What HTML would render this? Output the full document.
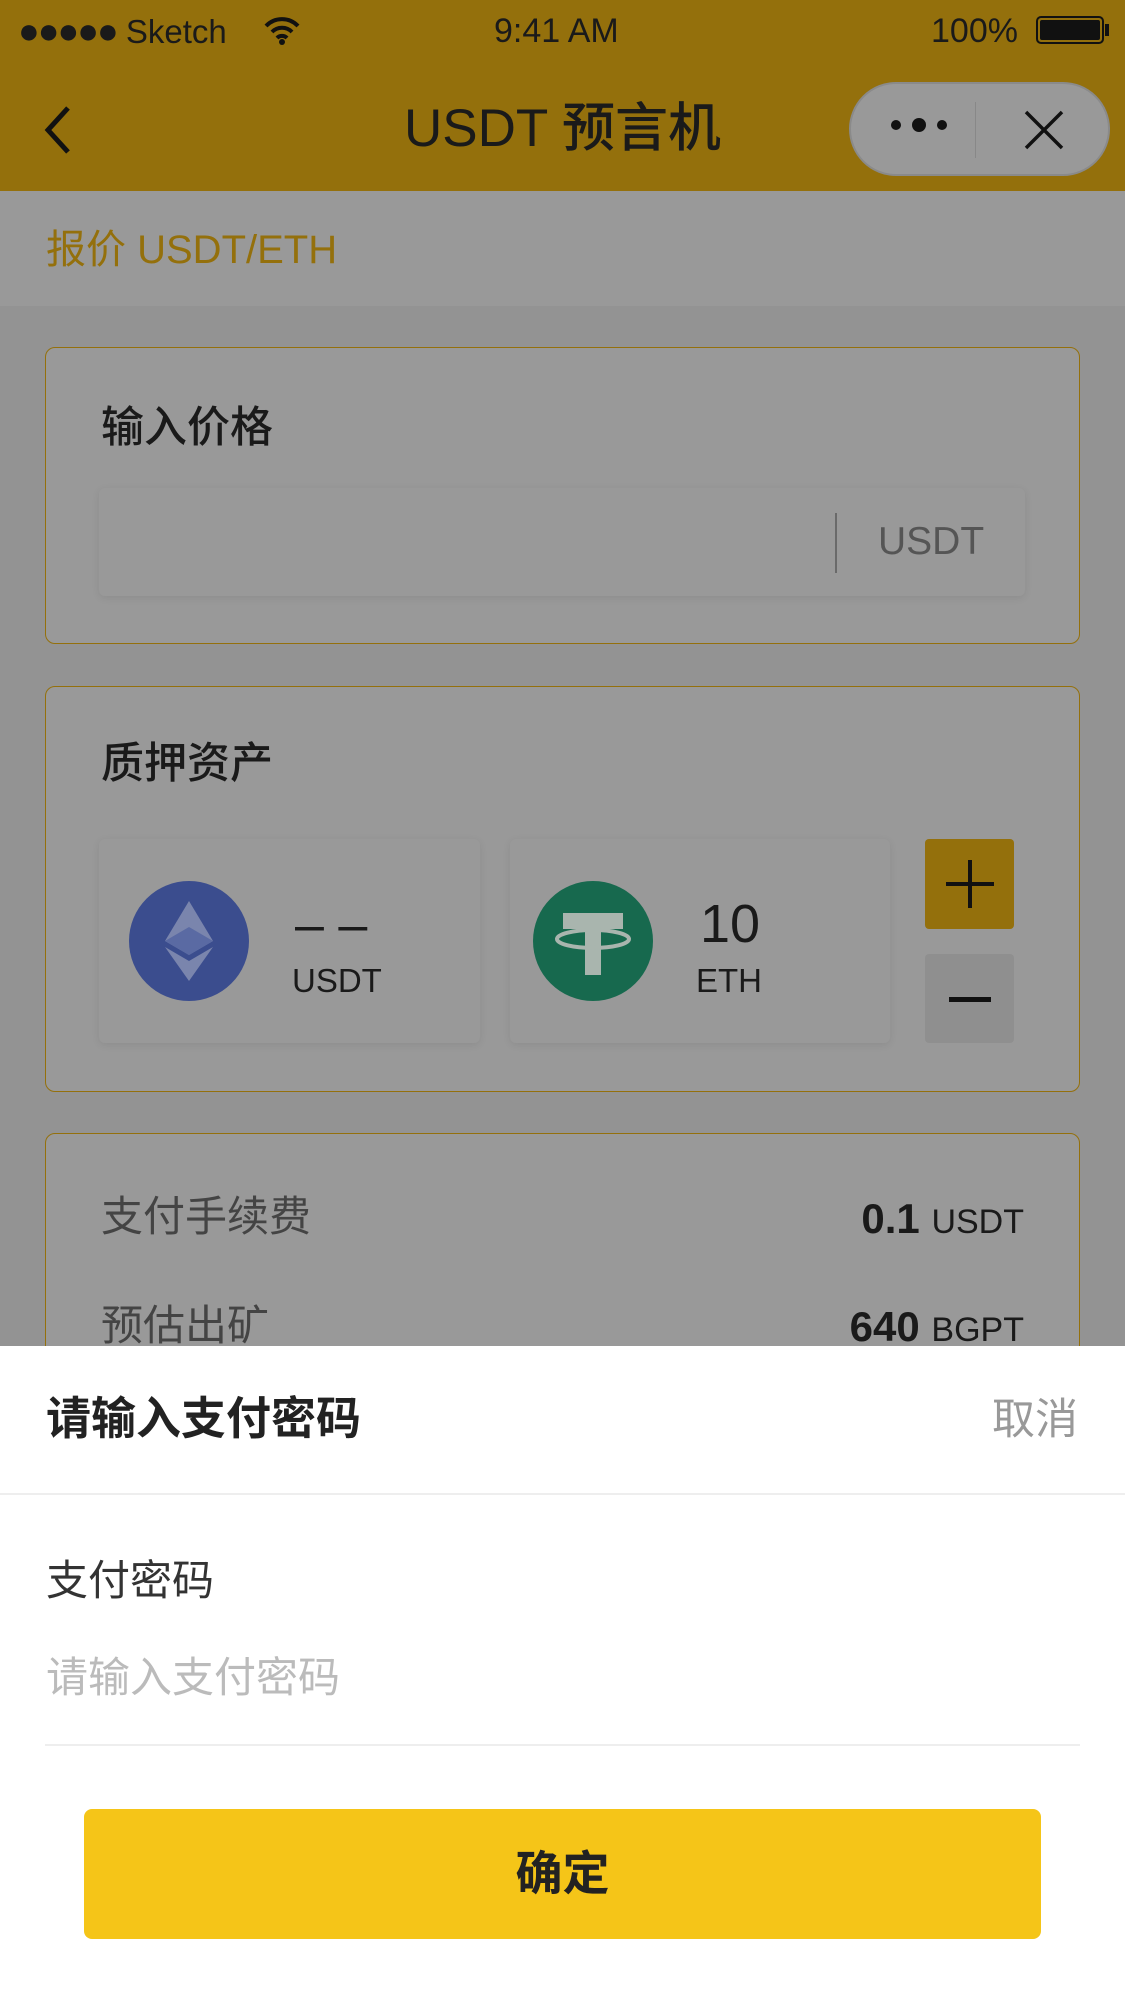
<!DOCTYPE html>
<html><head><meta charset="utf-8"><style>
*{margin:0;padding:0;box-sizing:border-box}
body{width:1125px;height:2001px;background:#939393;position:relative;overflow:hidden;font-family:"Liberation Sans","Noto Sans CJK SC",sans-serif;color:#1a1a1a}
.a{position:absolute;white-space:nowrap}
.card{position:absolute;left:45px;width:1035px;border:1.5px solid #94700c;border-radius:10px;background:#999}
.box{position:absolute;background:#999;border-radius:6px;box-shadow:0 2px 8px rgba(0,0,0,0.08)}
</style></head><body>
<div class="a" style="left:0;top:0;width:1125px;height:191px;background:#94700c"></div>
<div class="a" style="left:18px;top:10px;font-size:33px;line-height:42px"><span style="font-size:36px;letter-spacing:-2px">●●●●●</span> Sketch</div>
<svg class="a" style="left:262px;top:14px" width="40" height="32" viewBox="0 0 40 32"><path d="M4 12 A22 22 0 0 1 36 12 M10 18 A14 14 0 0 1 30 18 M15 24 A7 7 0 0 1 25 24" stroke="#111" stroke-width="4" fill="none"/><circle cx="20" cy="28" r="3" fill="#111"/></svg>
<div class="a" style="left:494px;top:10px;font-size:34px;line-height:42px">9:41 AM</div>
<div class="a" style="left:931px;top:10px;font-size:34px;line-height:42px">100%</div>
<div class="a" style="left:1036px;top:16px;width:68px;height:28px;border:2px solid #111;border-radius:5px;padding:2px"><div style="background:#111;width:100%;height:100%;border-radius:2px"></div></div>
<div class="a" style="left:1105px;top:24px;width:4px;height:12px;background:#111"></div>
<svg class="a" style="left:40px;top:104px" width="36" height="52" viewBox="0 0 36 52"><path d="M28 4 L8 26 L28 48" stroke="#111" stroke-width="5" fill="none"/></svg>
<div class="a" style="left:0;width:1125px;top:96px;text-align:center;font-size:53px;line-height:66px;font-weight:500">USDT 预言机</div>
<div class="a" style="left:849px;top:82px;width:261px;height:94px;border-radius:47px;background:#999;border:2px solid #8a8a8a"></div>
<div class="a" style="left:891px;top:120px;width:10px;height:10px;border-radius:5px;background:#111"></div>
<div class="a" style="left:912px;top:118px;width:14px;height:14px;border-radius:7px;background:#111"></div>
<div class="a" style="left:937px;top:120px;width:10px;height:10px;border-radius:5px;background:#111"></div>
<div class="a" style="left:975px;top:102px;width:1px;height:56px;background:#888"></div>
<svg class="a" style="left:1022px;top:108px" width="44" height="44"><path d="M4 4 L40 40 M40 4 L4 40" stroke="#111" stroke-width="3.5"/></svg>
<div class="a" style="left:0;top:191px;width:1125px;height:115px;background:#999"></div>
<div class="a" style="left:46px;top:226px;font-size:40px;line-height:48px;color:#94700c">报价 USDT/ETH</div>

<div class="card" style="top:347px;height:297px"></div>
<div class="a" style="left:101px;top:402px;font-size:43px;line-height:52px;font-weight:500">输入价格</div>
<div class="box" style="left:99px;top:488px;width:926px;height:108px"></div>
<div class="a" style="left:835px;top:513px;width:2px;height:60px;background:#6a6a6a"></div>
<div class="a" style="left:878px;top:518px;font-size:39px;line-height:48px;color:#555">USDT</div>

<div class="card" style="top:686px;height:406px"></div>
<div class="a" style="left:101px;top:738px;font-size:43px;line-height:52px;font-weight:500">质押资产</div>
<div class="box" style="left:99px;top:839px;width:381px;height:204px"></div>
<div class="box" style="left:510px;top:839px;width:380px;height:204px"></div>
<div class="a" style="left:925px;top:839px;width:89px;height:90px;background:#94700c;border-radius:4px"></div>
<div class="a" style="left:946px;top:882px;width:48px;height:4px;background:#111"></div>
<div class="a" style="left:968px;top:860px;width:4px;height:48px;background:#111"></div>
<div class="a" style="left:925px;top:954px;width:89px;height:89px;background:#8f8f8f;border-radius:4px"></div>
<div class="a" style="left:949px;top:997px;width:42px;height:5px;background:#111"></div>
<svg class="a" style="left:129px;top:881px" width="120" height="120" viewBox="0 0 120 120"><circle cx="60" cy="60" r="60" fill="#3b4d8e"/><path d="M60 20 L84 60 L60 74 L36 60Z" fill="#7a85ad"/><path d="M60 46 L84 60 L60 74 L36 60Z" fill="#5a6aa3"/><path d="M60 80 L84 66 L60 100 L36 66Z" fill="#7a85ad"/></svg>
<div class="a" style="left:295px;top:895px;font-size:52px;line-height:60px;font-weight:500">– –</div>
<div class="a" style="left:292px;top:961px;font-size:33px;line-height:40px">USDT</div>
<svg class="a" style="left:533px;top:881px" width="120" height="120" viewBox="0 0 120 120"><circle cx="60" cy="60" r="60" fill="#17694e"/><rect x="30" y="32" width="60" height="16" fill="#a9b5ae"/><rect x="52" y="32" width="16" height="62" fill="#a9b5ae"/><ellipse cx="60" cy="58" rx="36" ry="9" fill="none" stroke="#a9b5ae" stroke-width="4"/></svg>
<div class="a" style="left:700px;top:893px;font-size:54px;line-height:62px">10</div>
<div class="a" style="left:696px;top:961px;font-size:33px;line-height:40px">ETH</div>

<div class="card" style="top:1133px;height:300px"></div>
<div class="a" style="left:101px;top:1191px;font-size:42px;line-height:52px;color:#444">支付手续费</div>
<div class="a" style="right:101px;top:1194px;font-size:42px;line-height:50px;font-weight:bold">0.1 <span style="font-size:34px;font-weight:normal">USDT</span></div>
<div class="a" style="left:101px;top:1300px;font-size:42px;line-height:52px;color:#444">预估出矿</div>
<div class="a" style="right:101px;top:1302px;font-size:42px;line-height:50px;font-weight:bold">640 <span style="font-size:34px;font-weight:normal">BGPT</span></div>

<div class="a" style="left:0;top:1346px;width:1125px;height:655px;background:#fff"></div>
<div class="a" style="left:46px;top:1391px;font-size:45px;line-height:56px;font-weight:bold;color:#222">请输入支付密码</div>
<div class="a" style="right:47px;top:1393px;font-size:43px;line-height:54px;color:#999">取消</div>
<div class="a" style="left:0;top:1493px;width:1125px;height:2px;background:#eee"></div>
<div class="a" style="left:46px;top:1555px;font-size:42px;line-height:52px;color:#333">支付密码</div>
<div class="a" style="left:46px;top:1652px;font-size:42px;line-height:52px;color:#bbb">请输入支付密码</div>
<div class="a" style="left:45px;top:1744px;width:1035px;height:2px;background:#eee"></div>
<div class="a" style="left:84px;top:1809px;width:957px;height:130px;background:#f5c518;border-radius:8px;text-align:center;font-size:47px;line-height:130px;font-weight:bold;color:#222">确定</div>
</body></html>
